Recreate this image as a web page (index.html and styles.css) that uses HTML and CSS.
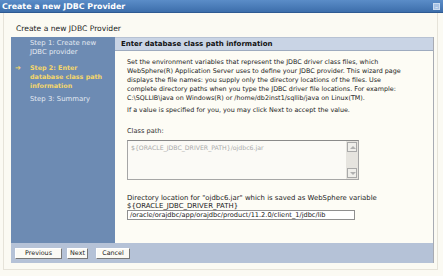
FILE: index.html
```html
<!DOCTYPE html>
<html>
<head>
<meta charset="utf-8">
<link rel="stylesheet" href="styles.css">
</head>
<body>
<div class="titlebar">
  <span class="title">Create a new JDBC Provider</span>
  <span class="minbtn">&#8211;</span>
</div>
<div class="frame">
  <div class="crumb">Create a new JDBC Provider</div>
  <div class="wizard">
    <div class="main">
      <div class="steps">
        <div class="step">Step 1: Create new JDBC provider</div>
        <div class="step current"><span class="arrow">&#10132;</span>Step 2: Enter database class path information</div>
        <div class="step">Step 3: Summary</div>
      </div>
      <div class="panel">
        <div class="panel-head">Enter database class path information</div>
        <div class="panel-body">
          <p class="intro">Set the environment variables that represent the JDBC driver class files, which WebSphere(R) Application Server uses to define your JDBC provider. This wizard page displays the file names: you supply only the directory locations of the files. Use complete directory paths when you type the JDBC driver file locations. For example: C:\SQLLIB\java on Windows(R) or /home/db2inst1/sqllib/java on Linux(TM).</p>
          <p class="intro">If a value is specified for you, you may click Next to accept the value.</p>
          <div class="field-label">Class path:</div>
          <div class="textarea">
            <div class="ta-text">${ORACLE_JDBC_DRIVER_PATH}/ojdbc6.jar</div>
            <div class="scroll">
              <span class="sbtn up"></span>
              <span class="strack"></span>
              <span class="sbtn down"></span>
            </div>
          </div>
          <div class="dir-label">Directory location for "ojdbc6.jar" which is saved as WebSphere variable<br>${ORACLE_JDBC_DRIVER_PATH}</div>
          <div class="input">/oracle/orajdbc/app/orajdbc/product/11.2.0/client_1/jdbc/lib</div>
        </div>
      </div>
    </div>
    <div class="buttons">
      <span class="btn prev">Previous</span>
      <span class="btn next">Next</span>
      <span class="btn cancel">Cancel</span>
    </div>
  </div>
</div>
</body>
</html>
```

FILE: styles.css
```css
* { box-sizing: border-box; }
html, body {
  margin: 0;
  padding: 0;
  background: #fbfaf3;
  font-family: "DejaVu Sans", Verdana, sans-serif;
  font-size: 6.4px;
  color: #222;
  width: 443px;
  height: 276px;
  overflow: hidden;
}
.titlebar {
  height: 13px;
  background: linear-gradient(#5b8dc8, #3d6eab);
  display: flex;
  align-items: center;
  justify-content: space-between;
  padding: 0 3px 0 2px;
  border-bottom: 1px solid #2e5a92;
}
.title {
  color: #fff;
  font-weight: bold;
  font-size: 7.9px;
}
.minbtn {
  width: 7px;
  height: 7px;
  background: #a7c2e4;
  border: 1px solid #c9dbf0;
  color: #fff;
  font-size: 6px;
  line-height: 5px;
  text-align: center;
}
.frame {
  margin: 0 5px 0 3px;
  height: 257px;
  border: 1px solid #e6e3d9;
  border-top: none;
  padding: 11px 3px 0 7px;
}
.crumb {
  height: 13px;
  padding-left: 5px;
  font-size: 7.6px;
  line-height: 9px;
  color: #222;
}
.wizard {
  width: 423px;
}
.main {
  display: flex;
  height: 206px;
}
.steps {
  width: 104px;
  background: #6d8bb3;
  padding: 2px 4px 0 19px;
}
.step {
  color: #e4eaf2;
  font-size: 6.9px;
  line-height: 8.5px;
  margin-bottom: 8px;
  position: relative;
}
.step.current {
  color: #f5d76a;
  font-weight: bold;
  font-size: 6.4px;
  line-height: 9px;
  margin-bottom: 4px;
}
.arrow {
  position: absolute;
  left: -15px;
  top: 0;
  color: #f5d76a;
  font-size: 7px;
}
.panel {
  flex: 1;
  display: flex;
  flex-direction: column;
  border-right: 1px solid #a8abb3;
}
.panel-head {
  height: 14px;
  background: #c9d4e5;
  border-bottom: 1px solid #9eabbf;
  border-top: 1px solid #b7c2d3;
  font-weight: bold;
  font-size: 7px;
  line-height: 13px;
  padding-left: 6px;
  color: #111;
}
.panel-body {
  flex: 1;
  background: #fdfcf5;
  padding: 7px 10px 0 12px;
}
.intro {
  margin: 0 0 3px 0;
  max-width: 284px;
  line-height: 9px;
  font-size: 6.4px;
}
.field-label {
  margin-top: 12px;
  margin-bottom: 5px;
  font-size: 6.6px;
  line-height: 8px;
  color: #333;
}
.textarea {
  width: 232px;
  height: 40px;
  border: 1px solid #a6a6a6;
  border-top-color: #8a8a8a;
  background: #fbfaf6;
  display: flex;
}
.ta-text {
  flex: 1;
  color: #aaa;
  padding: 3px 3px;
  font-size: 6.2px;
}
.scroll {
  width: 12px;
  background: #e6e4df;
  display: flex;
  flex-direction: column;
  padding: 1px;
}
.sbtn {
  height: 10px;
  border: 1px solid #a9a9a9;
  background: #efeeea;
  position: relative;
}
.sbtn::after {
  content: "";
  position: absolute;
  left: 2px;
  border-left: 3px solid transparent;
  border-right: 3px solid transparent;
}
.sbtn.up::after { top: 3px; border-bottom: 3px solid #b0b0b0; }
.sbtn.down::after { top: 3px; border-top: 3px solid #b0b0b0; }
.strack { flex: 1; }
.dir-label {
  margin-top: 14px;
  line-height: 8px;
  font-size: 6.9px;
}
.input {
  width: 228px;
  height: 10px;
  border: 1px solid #8f8f8f;
  background: #fff;
  font-size: 6.6px;
  line-height: 8px;
  padding-left: 2px;
  white-space: nowrap;
  overflow: hidden;
}
.buttons {
  height: 20px;
  background: #b5c2d7;
  display: flex;
  align-items: center;
  padding-left: 4px;
  border-right: 1px solid #a8abb3;
}
.btn {
  height: 11px;
  background: #fbfaf5;
  border: 1px solid #fff;
  border-right-color: #777;
  border-bottom-color: #777;
  font-size: 6.4px;
  line-height: 9px;
  color: #222;
  text-align: center;
}
.btn.prev { width: 47px; margin-right: 5px; }
.btn.next { width: 21px; margin-right: 8px; }
.btn.cancel { width: 34px; }
```
